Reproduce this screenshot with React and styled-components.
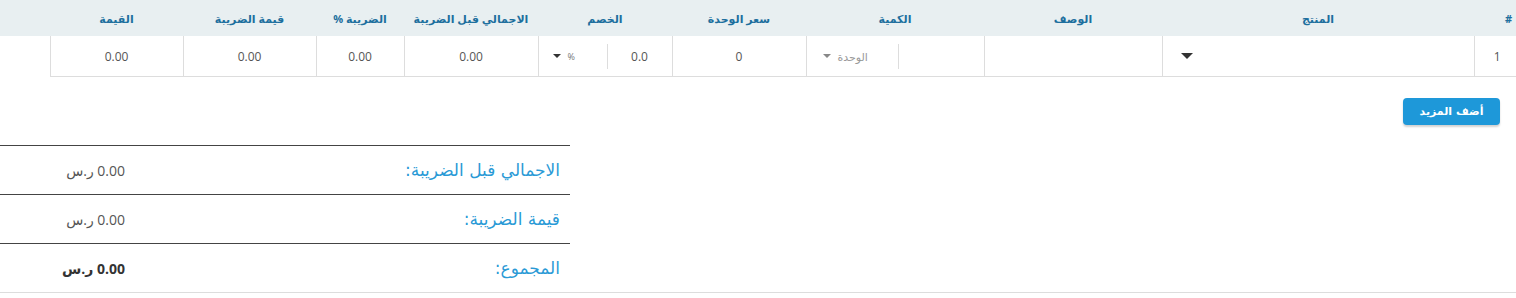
import React from 'react'
import styled, { createGlobalStyle } from 'styled-components'

const Global = createGlobalStyle`
  body {
    margin: 0;
    background: #fff;
    font-family: "Open Sans", "DejaVu Sans", sans-serif;
  }
`

const Page = styled.div`
  direction: rtl;
  width: 1516px;
  height: 293px;
  box-sizing: border-box;
  border-bottom: 1px solid #ddd;
  overflow: hidden;
`

const Table = styled.table`
  width: 1516px;
  border-collapse: collapse;
  table-layout: fixed;
`

const Th = styled.th`
  width: ${p => p.w}px;
  height: 36px;
  padding: 0;
  background: #e8eff1;
  color: #1d6f9e;
  font-size: 11px;
  font-weight: bold;
  text-align: ${p => (p.side ? 'right' : 'center')};
  padding-right: ${p => (p.side ? '4px' : '0')};
  vertical-align: middle;
`

const Td = styled.td`
  height: 40px;
  padding: 0;
  border: 1px solid #ddd;
  border-top: none;
  color: #555;
  font-size: 12px;
  text-align: center;
  vertical-align: middle;
  &:first-child {
    border-right: none;
    padding-left: 4px;
  }
`

const EmptyTd = styled.td`
  padding: 0;
  border: none;
`

const Split = styled.div`
  display: flex;
  align-items: center;
  height: 40px;
`

const Part = styled.div`
  flex: ${p => p.grow || 1};
  display: flex;
  align-items: center;
  justify-content: ${p => p.justify || 'center'};
  gap: 7px;
  padding: ${p => p.pad || '0'};
  height: 25px;
  border-left: ${p => (p.divider ? '1px solid #ddd' : 'none')};
  color: ${p => p.color || '#555'};
  font-size: ${p => p.size || 12}px;
`

const Caret = styled.span`
  display: inline-block;
  width: 0;
  height: 0;
  border-left: ${p => p.s}px solid transparent;
  border-right: ${p => p.s}px solid transparent;
  border-top: ${p => p.s}px solid ${p => p.c};
`

const ProductSelect = styled.div`
  display: flex;
  justify-content: flex-end;
  padding-left: 18px;
`

const Actions = styled.div`
  display: flex;
  justify-content: flex-start;
  padding: 21px 16px 0 0;
`

const AddButton = styled.button`
  width: 97px;
  height: 27px;
  border: none;
  border-radius: 4px;
  background: #1e98d9;
  color: #fff;
  font-family: "DejaVu Sans", sans-serif;
  font-size: 11px;
  font-weight: bold;
  box-shadow: 0 2px 2px rgba(0, 0, 0, 0.18);
`

const Totals = styled.div`
  width: 570px;
  margin-top: 20px;
  margin-right: auto;
  border-top: 1px solid #444;
`

const TotalRow = styled.div`
  display: grid;
  grid-template-columns: 1fr 135px;
  align-items: center;
  height: 48px;
  border-bottom: 1px solid #444;
`

const Label = styled.div`
  padding-right: 10px;
  color: #2a9ad6;
  font-size: 17px;
  font-family: "DejaVu Sans", sans-serif;
`

const Value = styled.div`
  padding-right: 10px;
  text-align: right;
  color: ${p => (p.bold ? '#333' : '#555')};
  font-weight: ${p => (p.bold ? 'bold' : 'normal')};
  font-size: 14px;
`

const columns = [
  { t: '#', w: 38, side: true },
  { t: 'المنتج', w: 312 },
  { t: 'الوصف', w: 178 },
  { t: 'الكمية', w: 178 },
  { t: 'سعر الوحدة', w: 134 },
  { t: 'الخصم', w: 134 },
  { t: 'الاجمالي قبل الضريبة', w: 134 },
  { t: 'الضريبة %', w: 88 },
  { t: 'قيمة الضريبة', w: 133 },
  { t: 'القيمة', w: 133 },
  { t: '', w: 50 },
]

const totals = [
  { label: 'الاجمالي قبل الضريبة:', value: '0.00 ر.س' },
  { label: 'قيمة الضريبة:', value: '0.00 ر.س' },
  { label: 'المجموع:', value: '0.00 ر.س', bold: true },
]

const App = () => {
  return <>
    <Global />
    <Page>
      <Table>
        <thead>
          <tr>
            {columns.map((c, i) => <Th key={i} w={c.w} side={c.side}>{c.t}</Th>)}
          </tr>
        </thead>
        <tbody>
          <tr>
            <Td>1</Td>
            <Td>
              <ProductSelect><Caret s={6} c="#333" /></ProductSelect>
            </Td>
            <Td></Td>
            <Td>
              <Split>
                <Part divider />
                <Part grow={0.884} justify="flex-end" pad="0 0 0 16px" color="#999" size={11}>
                  الوحدة <Caret s={4} c="#888" />
                </Part>
              </Split>
            </Td>
            <Td>0</Td>
            <Td>
              <Split>
                <Part grow={1} divider size={12}>0.0</Part>
                <Part grow={0.846} justify="flex-end" pad="0 0 0 14px" color="#777" size={9}>
                  % <Caret s={4} c="#333" />
                </Part>
              </Split>
            </Td>
            <Td>0.00</Td>
            <Td>0.00</Td>
            <Td>0.00</Td>
            <Td>0.00</Td>
            <EmptyTd></EmptyTd>
          </tr>
        </tbody>
      </Table>
      <Actions>
        <AddButton>أضف المزيد</AddButton>
      </Actions>
      <Totals>
        {totals.map((r, i) => (
          <TotalRow key={i}>
            <Label>{r.label}</Label>
            <Value bold={r.bold}>{r.value}</Value>
          </TotalRow>
        ))}
      </Totals>
    </Page>
  </>
}

export default App
